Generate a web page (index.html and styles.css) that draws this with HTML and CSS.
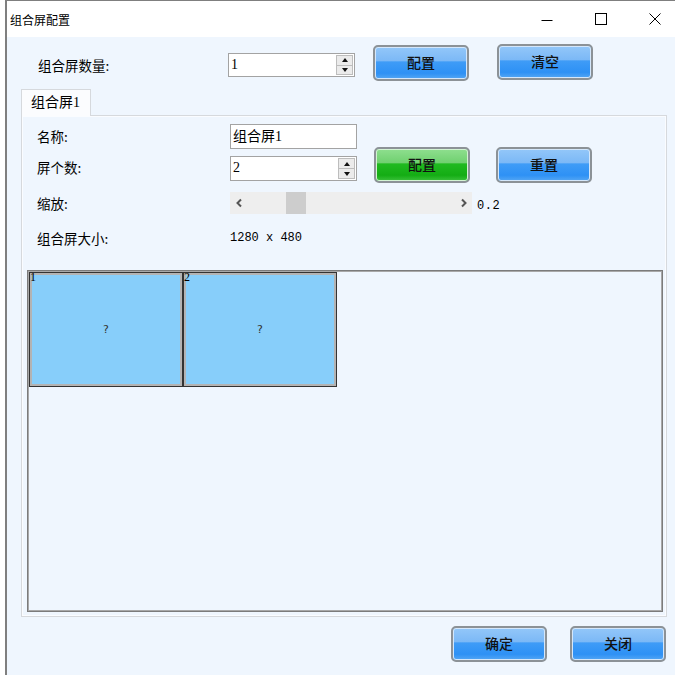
FILE: index.html
```html
<!DOCTYPE html>
<html lang="zh-CN">
<head>
<meta charset="utf-8">
<title>组合屏配置</title>
<link rel="stylesheet" href="styles.css">
</head>
<body>
<div class="window">
  <div class="titlebar">
    <span class="title">组合屏配置</span>
    <div class="caption">
      <span class="cbtn"><svg width="12" height="12" viewBox="0 0 12 12"><path d="M0.5 7.5H11.5" stroke="#000" stroke-width="1"/></svg></span>
      <span class="cbtn"><svg width="12" height="12" viewBox="0 0 12 12"><rect x="0.5" y="0.5" width="11" height="11" fill="none" stroke="#000" stroke-width="1"/></svg></span>
      <span class="cbtn"><svg width="12" height="12" viewBox="0 0 12 12"><path d="M0.5 0.5L11.5 11.5M11.5 0.5L0.5 11.5" stroke="#000" stroke-width="1"/></svg></span>
    </div>
  </div>
  <div class="content">
    <div class="top-row">
      <span class="lbl top-lbl">组合屏数量:</span>
      <div class="spin top-spin"><span class="val">1</span><span class="spinbtn"><i class="up"></i><i class="down"></i></span></div>
      <button class="btn blue btn-cfg">配置</button>
      <button class="btn blue btn-clear">清空</button>
    </div>
    <div class="tabs"><div class="tab">组合屏1</div></div>
    <div class="panel">
      <div class="prow r-name">
        <span class="lbl plbl">名称:</span>
        <div class="textbox">组合屏1</div>
      </div>
      <div class="prow r-count">
        <span class="lbl plbl count-lbl">屏个数:</span>
        <div class="spin count-spin"><span class="val">2</span><span class="spinbtn"><i class="up"></i><i class="down"></i></span></div>
        <button class="btn green btn-cfg2">配置</button>
        <button class="btn blue btn-reset">重置</button>
      </div>
      <div class="prow r-zoom">
        <span class="lbl plbl">缩放:</span>
        <div class="scroll">
          <span class="arrow"><svg width="8" height="10" viewBox="0 0 8 10"><path d="M6 1.5L2.5 5L6 8.5" fill="none" stroke="#555" stroke-width="2"/></svg></span>
          <span class="track"><span class="thumb"></span></span>
          <span class="arrow"><svg width="8" height="10" viewBox="0 0 8 10"><path d="M2 1.5L5.5 5L2 8.5" fill="none" stroke="#555" stroke-width="2"/></svg></span>
        </div>
        <span class="mono zoomval">0.2</span>
      </div>
      <div class="prow r-size">
        <span class="lbl plbl">组合屏大小:</span>
        <span class="mono">1280 x 480</span>
      </div>
      <div class="canvas">
        <div class="screen"><span class="num">1</span><span class="q">?</span></div>
        <div class="screen"><span class="num">2</span><span class="q">?</span></div>
      </div>
    </div>
    <div class="footer">
      <button class="btn blue">确定</button>
      <button class="btn blue">关闭</button>
    </div>
  </div>
</div>
</body>
</html>
```
FILE: styles.css
```css
body {
  margin: 0;
  background: #fff;
  overflow: hidden;
  font-family: "Noto Sans CJK SC", "Noto Sans", sans-serif;
  font-size: 14px;
  color: #000;
}

.window {
  margin-left: 5px;
  width: 670px;
  height: 675px;
  box-sizing: border-box;
  border-left: 2px solid #7f7f7f;
  border-top: 1px solid #7f7f7f;
  background: #eff6fe;
  overflow: hidden;
}

.titlebar {
  height: 36px;
  background: #fff;
  display: flex;
  align-items: center;
}

.title {
  padding-left: 3px;
  font-size: 12px;
}

.caption {
  margin-left: auto;
  margin-right: -7px;
  display: flex;
}

.cbtn {
  width: 54px;
  height: 36px;
  display: flex;
  align-items: center;
  justify-content: center;
}

.content {
  display: flex;
  flex-direction: column;
}

.lbl {
  line-height: 24px;
  white-space: nowrap;
  font-size: 13.5px;
}

.top-row {
  display: flex;
  align-items: flex-start;
  margin-top: 8px;
  height: 36px;
  padding-left: 31px;
}

.top-lbl {
  width: 190px;
  margin-top: 8px;
}

.top-spin {
  margin-top: 8px;
}

.btn-cfg {
  margin-left: 18px;
}

.btn-clear {
  margin-left: 28px;
  margin-top: -1px;
}

.spin {
  width: 127px;
  height: 24px;
  box-sizing: border-box;
  border: 1px solid #a3a3a3;
  background: #fff;
  display: flex;
}

.spin .val,
.textbox,
.tab {
  font-family: "Liberation Serif", "Noto Sans CJK SC", serif;
  font-size: 14px;
}

.spin .val {
  flex: 1;
  padding-left: 2px;
  line-height: 22px;
}

.spinbtn {
  width: 17px;
  margin: 1px 1px 1px 0;
  box-sizing: border-box;
  border: 1px solid #bdbdbd;
  background: #ebebeb;
  display: flex;
  flex-direction: column;
}

.spinbtn i {
  flex: 1;
  display: flex;
  align-items: center;
  justify-content: center;
}

.spinbtn i + i {
  border-top: 1px solid #bdbdbd;
}

.spinbtn .up::after {
  content: "";
  border-left: 3px solid transparent;
  border-right: 3px solid transparent;
  border-bottom: 4px solid #111;
}

.spinbtn .down::after {
  content: "";
  border-left: 3px solid transparent;
  border-right: 3px solid transparent;
  border-top: 4px solid #111;
}

.btn {
  width: 96px;
  height: 36px;
  box-sizing: border-box;
  padding: 0 0 2px;
  border: 2px solid #8c9297;
  border-radius: 5px;
  box-shadow: inset 0 0 0 1px #d4e7fb;
  font-family: "Noto Sans CJK SC", sans-serif;
  font-size: 14px;
  font-weight: 500;
  color: #111;
  flex: none;
}

.blue {
  background: linear-gradient(#93c7f9 0%, #7bb8f6 44%, #3f9cf7 46%, #2e91f5 82%, #55a7f4 100%);
}

.green {
  background: linear-gradient(#8fdf8f 0%, #6fd06f 44%, #20ba20 46%, #14ad14 82%, #3cc13c 100%);
  box-shadow: inset 0 0 0 1px #d3f3d3;
}

.tabs {
  display: flex;
  margin-top: 8px;
  padding-left: 14px;
  height: 27px;
  margin-bottom: -1px;
  position: relative;
  z-index: 1;
}

.tab {
  width: 70px;
  box-sizing: border-box;
  border: 1px solid #d6d9dd;
  border-bottom: none;
  background: #fbfcfe;
  padding-left: 9px;
  line-height: 26px;
}

.panel {
  margin: 0 8px 0 14px;
  border: 1px solid #d6d9dd;
  box-shadow: inset 0 0 0 1px #fafcff;
  padding: 8px 0 4px;
  display: flex;
  flex-direction: column;
}

.prow {
  display: flex;
  align-items: flex-start;
  padding-left: 15px;
}

.plbl {
  width: 193px;
}

.r-name .plbl {
  line-height: 25px;
}

.textbox {
  width: 127px;
  height: 25px;
  box-sizing: border-box;
  border: 1px solid #a3a3a3;
  background: #fff;
  padding-left: 2px;
  line-height: 23px;
}

.r-count {
  margin-top: -2px;
  height: 36px;
}

.count-lbl {
  margin-top: 9px;
  line-height: 23px;
}

.count-spin {
  margin-top: 9px;
  height: 25px;
}

.btn-cfg2 {
  margin-left: 17px;
}

.btn-reset {
  margin-left: 26px;
}

.r-zoom {
  margin-top: 9px;
  align-items: center;
  height: 22px;
}

.scroll {
  width: 242px;
  height: 22px;
  background: #eeeeee;
  display: flex;
  align-items: stretch;
}

.arrow {
  width: 17px;
  display: flex;
  align-items: center;
  justify-content: center;
}

.track {
  flex: 1;
  display: flex;
}

.thumb {
  width: 20px;
  margin-left: 39px;
  background: #cdcdcd;
}

.mono {
  font-family: "Liberation Mono", "DejaVu Sans Mono", monospace;
  font-size: 12px;
}

.zoomval {
  margin-left: 5px;
  margin-top: 6px;
  letter-spacing: 0.5px;
}

.r-size {
  margin-top: 13px;
  align-items: center;
  height: 22px;
}

.canvas {
  margin: 21px 3px 0 5px;
  height: 342px;
  box-sizing: border-box;
  border: 1px solid #7b7b7b;
  box-shadow: inset 0 0 0 1px #a8a8a8;
  padding: 1px;
  display: flex;
  align-items: flex-start;
}

.screen {
  width: 154px;
  height: 115px;
  box-sizing: border-box;
  border: 1px solid #333;
  box-shadow: inset 0 0 0 2px #b3b3b3;
  background: #87cefa;
  position: relative;
  display: flex;
  align-items: center;
  justify-content: center;
}

.num {
  position: absolute;
  left: 0;
  top: -2px;
  font-family: "Liberation Serif", serif;
  font-size: 12px;
  line-height: 12px;
}

.q {
  font-family: "DejaVu Sans", sans-serif;
  font-size: 11px;
  color: #333;
}

.footer {
  display: flex;
  justify-content: flex-end;
  gap: 23px;
  margin-top: 9px;
  padding-right: 9px;
}
```
